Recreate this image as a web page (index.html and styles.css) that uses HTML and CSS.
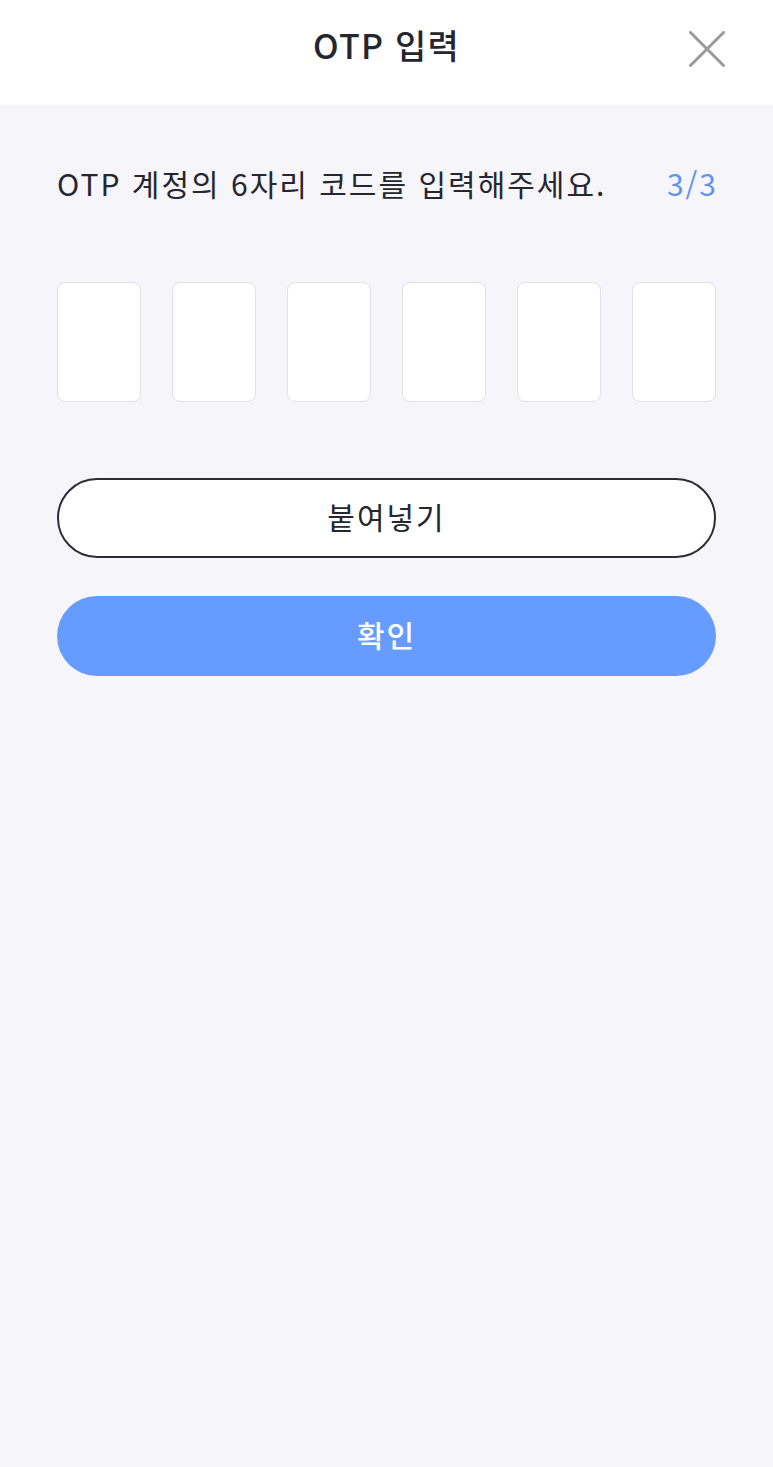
FILE: index.html
```html
<!DOCTYPE html>
<html lang="ko">
<head>
<meta charset="utf-8">
<title>OTP 입력</title>
<link rel="stylesheet" href="styles.css">
</head>
<body>
<div class="screen">
  <header class="topbar">
    <h1 class="title">OTP 입력</h1>
    <button class="close" aria-label="닫기">
      <svg width="36" height="36" viewBox="0 0 36 36"><path d="M1.5 1.5L34.5 34.5M34.5 1.5L1.5 34.5" stroke="#9b9b9f" stroke-width="3" fill="none" stroke-linecap="round"/></svg>
    </button>
  </header>
  <main class="content">
    <div class="guide">
      <p class="guide-text">OTP 계정의 6자리 코드를 입력해주세요.</p>
      <span class="step">3/3</span>
    </div>
    <div class="codes">
      <div class="code"></div>
      <div class="code"></div>
      <div class="code"></div>
      <div class="code"></div>
      <div class="code"></div>
      <div class="code"></div>
    </div>
    <button class="btn btn-paste">붙여넣기</button>
    <button class="btn btn-confirm">확인</button>
  </main>
</div>
</body>
</html>
```
FILE: styles.css
```css
* { box-sizing: border-box; }
html, body { margin: 0; padding: 0; }
body {
  font-family: "Noto Sans CJK KR", "Noto Sans", sans-serif;
  background: #f5f5fa;
  color: #26262e;
}
.screen { min-height: 1467px; display: flex; flex-direction: column; }
.topbar {
  height: 105px;
  background: #ffffff;
  display: flex;
  align-items: center;
  justify-content: center;
  position: relative;
}
.title {
  margin: 0 0 16px 0;
  font-size: 34px;
  font-weight: 500;
  color: #26262e;
  letter-spacing: 1.2px;
}
.close {
  position: absolute;
  right: 48px;
  top: 31px;
  width: 36px;
  height: 36px;
  padding: 0;
  border: 0;
  background: none;
  display: flex;
}
.content {
  flex: 1;
  padding: 56px 57px 0 57px;
  display: flex;
  flex-direction: column;
}
.guide {
  display: flex;
  justify-content: space-between;
  align-items: center;
  height: 44px;
}
.guide-text {
  margin: 0;
  font-size: 30px;
  font-weight: 400;
  color: #26262e;
  letter-spacing: 2px;
}
.step {
  font-size: 30px;
  color: #5d95ee;
  letter-spacing: 2px;
  margin-right: -2px;
}
.codes {
  display: flex;
  justify-content: space-between;
  margin-top: 77px;
}
.code {
  width: 84px;
  height: 120px;
  background: #ffffff;
  border: 1.5px solid #e1e1e7;
  border-radius: 8px;
}
.btn {
  width: 100%;
  height: 80px;
  border-radius: 40px;
  font-family: "Noto Sans CJK KR", "Noto Sans", sans-serif;
  font-size: 30px;
  padding: 0 0 4px 0;
  letter-spacing: 2px;
}
.btn-paste {
  margin-top: 76px;
  background: #ffffff;
  border: 2px solid #2c2c34;
  color: #26262e;
  font-weight: 400;
}
.btn-confirm {
  margin-top: 38px;
  background: #669cff;
  border: 0;
  color: #ffffff;
  font-weight: 500;
}
```
